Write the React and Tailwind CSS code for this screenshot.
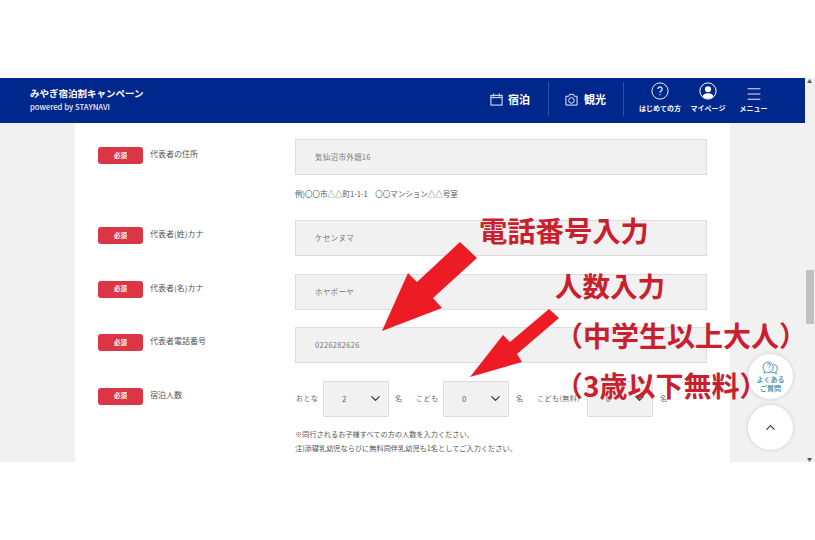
import { ChevronDown, ChevronUp, Menu } from "lucide-react";

const jp = "font-['Noto_Sans_CJK_JP','Noto_Sans',sans-serif]";

function Badge() {
  return (
    <span className="flex h-[17px] w-[45px] shrink-0 items-center justify-center rounded-[3px] bg-[#dc3545] text-[6.5px] font-bold text-white">
      必須
    </span>
  );
}

function Label({ children, top = "pt-[7px]" }) {
  return (
    <div className={`flex w-[197px] shrink-0 items-start gap-[7px] ${top}`}>
      <Badge />
      <span className="text-[8px] leading-[14px] text-[#555]">{children}</span>
    </div>
  );
}

function Field({ label, value, top }) {
  return (
    <div className="flex">
      <Label top={top}>{label}</Label>
      <div className="flex h-[36px] w-[412px] items-center border border-[#dddddd] bg-[#f1f1f1] pl-[19px] text-[7.5px] tracking-[0.3px] text-[#777]">
        {value}
      </div>
    </div>
  );
}

function Select({ value }) {
  return (
    <div className="flex h-[36px] w-[66px] shrink-0 items-center justify-between border border-[#dddddd] bg-[#f1f1f1] pl-[18px] pr-[5px] text-[8px] text-[#666]">
      <span>{value}</span>
      <ChevronDown className="h-[15px] w-[15px] text-[#333]" strokeWidth={2} />
    </div>
  );
}

function Header() {
  return (
    <header className="flex h-[45px] shrink-0 items-center justify-between bg-[#00288c] pb-[3px] pl-[30px] pr-[36px] text-white">
      <div>
        <div className="text-[9.5px] font-bold leading-[16px]">みやぎ宿泊割キャンペーン</div>
        <div className="text-[7.7px] font-medium leading-[12px] text-[#e8ecf8]">powered by STAYNAVI</div>
      </div>
      <nav className="flex h-[34px] items-center">
        <div className="flex w-[58px] items-center gap-[5px] text-[11px] font-bold">
          <svg viewBox="0 0 14 14" className="h-[13px] w-[13px]" fill="none" stroke="currentColor" strokeWidth="1">
            <rect x="1" y="2.5" width="12" height="10.5" />
            <path d="M1 5h12M4 .5v3.5M10 .5v3.5" />
          </svg>
          宿泊
        </div>
        <div className="h-[34px] w-px bg-[#2c52a8]" />
        <div className="flex w-[74px] items-center justify-end gap-[6px] pr-[17px] text-[11px] font-bold">
          <svg viewBox="0 0 14 14" className="h-[13px] w-[13px]" fill="none" stroke="currentColor" strokeWidth="1">
            <path d="M1 3.5h3L5 1.5h4l1 2h3V13H1z" />
            <circle cx="7" cy="8" r="3" />
          </svg>
          観光
        </div>
        <div className="h-[34px] w-px bg-[#2c52a8]" />
        <div className="-mt-[3px] flex w-[58px] flex-col items-center pl-[14px] text-[7px] font-bold leading-[10px]">
          <svg viewBox="0 0 20 20" className="mb-[3px] h-[18px] w-[18px]" fill="none" stroke="currentColor" strokeWidth="1">
            <circle cx="10" cy="10" r="9" />
            <path d="M7.6 7.8a2.4 2.4 0 1 1 3.6 2.1c-.8.5-1.2 1-1.2 2M10 13.6v1.2" strokeWidth="1.3" />
          </svg>
          <span className="whitespace-nowrap">はじめての方</span>
        </div>
        <div className="-mt-[3px] flex w-[46px] flex-col items-center pl-[6px] text-[7px] font-bold leading-[10px]">
          <svg viewBox="0 0 20 20" className="mb-[3px] h-[18px] w-[18px]">
            <circle cx="10" cy="10" r="9" fill="none" stroke="currentColor" strokeWidth="1.1" />
            <circle cx="10" cy="8" r="3.4" fill="currentColor" />
            <path d="M3.8 16a6.6 5.4 0 0 1 12.4 0a9 9 0 0 1-12.4 0z" fill="currentColor" />
          </svg>
          <span className="whitespace-nowrap">マイページ</span>
        </div>
        <div className="-mt-[3px] flex w-[41px] flex-col items-center pl-[10px] text-[7px] font-bold leading-[10px]">
          <Menu className="mt-[3px] h-[18px] w-[18px]" strokeWidth={1.2} />
          <span className="whitespace-nowrap">メニュー</span>
        </div>
      </nav>
    </header>
  );
}

function Arrows() {
  return (
    <svg viewBox="0 0 815 540" className="pointer-events-none absolute left-0 top-0 h-[540px] w-[815px]">
      <polygon fill="#ed1c24" points="382,331 408,273 417,282 460,242 477,258 433,298 442,308" />
      <polygon fill="#ed1c24" points="470,377 503,335 510,342 549,309 559,318 517,354 522,362" />
    </svg>
  );
}

function Annotation({ className, children }) {
  return (
    <div className={`absolute whitespace-nowrap font-bold leading-none text-[#c9202e] ${className}`}>{children}</div>
  );
}

export default function App() {
  return (
    <div className={`relative h-[540px] w-[815px] overflow-hidden bg-white pt-[78px] ${jp}`}>
      <div className="flex h-[384px]">
        <div className="flex w-[805px] flex-col">
          <Header />
          <div className="flex min-h-0 flex-1 overflow-hidden bg-[#f1f1f1] px-[75px]">
            <main className="flex w-[655px] flex-col bg-white pl-[23px] pt-4">
              <Field label="代表者の住所" value="気仙沼市外畑16" top="pt-2" />
              <div className="ml-[197px] mt-[13px] text-[7.5px] leading-[12px] text-[#555]">
                例)〇〇市△△町1-1-1　〇〇マンション△△号室
              </div>
              <div className="mt-[20px] flex flex-col gap-[17.5px]">
                <Field label="代表者(姓)カナ" value="ケセンヌマ" />
                <Field label="代表者(名)カナ" value="ホヤボーヤ" />
                <Field label="代表者電話番号" value="0226282626" />
                <div className="flex">
                  <Label>宿泊人数</Label>
                  <div className="w-[412px]">
                    <div className="flex items-center whitespace-nowrap text-[7px] tracking-[0.5px] text-[#666]">
                      <span className="ml-px w-[27px]">おとな</span>
                      <Select value="2" />
                      <span className="ml-[6px] w-[21px]">名</span>
                      <span className="w-[27px]">こども</span>
                      <Select value="0" />
                      <span className="ml-[7px] w-[21px]">名</span>
                      <span className="w-[50px]">こども(無料)</span>
                      <Select value="0" />
                      <span className="ml-[7px]">名</span>
                    </div>
                    <div className="mt-[10px] whitespace-nowrap text-[7.2px] leading-[14px] text-[#555]">
                      <p>※同行されるお子様すべての方の人数を入力ください。</p>
                      <p>注)添寝乳幼児ならびに無料同伴乳幼児も1名としてご入力ください。</p>
                    </div>
                  </div>
                </div>
              </div>
            </main>
          </div>
        </div>
        <div className="relative w-[10px] bg-[#f1f1f1]">
          <div className="absolute left-[1px] top-[192px] h-[54px] w-[8px] bg-[#c1c1c1]" />
          <div className="absolute left-[2px] top-[0px] text-[5px] leading-[6px] text-[#555]">▲</div>
          <div className="absolute bottom-0 left-[2px] text-[5px] leading-[6px] text-[#555]">▼</div>
        </div>
      </div>

      <Arrows />
      <Annotation className="left-[479px] top-[216px] text-[28.3px]">電話番号入力</Annotation>
      <Annotation className="left-[555px] top-[272px] text-[27.5px]">人数入力</Annotation>
      <Annotation className="left-[555px] top-[321px] text-[28px]">（中学生以上大人）</Annotation>
      <Annotation className="left-[555px] top-[371px] text-[28px]">（3歳以下無料）</Annotation>

      <div className="absolute left-[748px] top-[354px] flex h-[45px] w-[45px] flex-col items-center justify-center rounded-full bg-white text-[7px] font-medium leading-[9.5px] text-[#2f86a8] shadow-[0_0_4px_rgba(0,0,0,0.15)]">
        <svg viewBox="0 0 18 16" className="h-[15px] w-[17px]" fill="none" stroke="currentColor" strokeWidth="0.9">
          <path d="M2.5 11.5A5.5 5.5 0 1 1 5 13l-3 1z" />
          <path d="M12 4.5a4.5 4.5 0 0 1 2.6 8l.9 2-3-1a5 5 0 0 1-4-1" />
          <path d="M5.8 5.5a1.6 1.6 0 1 1 2.2 1.6c-.5.3-.6.6-.6 1.2M7.4 9.6v.6" />
        </svg>
        <span>よくある</span>
        <span>ご質問</span>
      </div>
      <div className="absolute left-[748px] top-[405px] flex h-[45px] w-[45px] items-center justify-center rounded-full bg-white shadow-[0_0_4px_rgba(0,0,0,0.15)]">
        <ChevronUp className="h-[15px] w-[15px] text-[#333]" strokeWidth={1.8} />
      </div>
    </div>
  );
}
